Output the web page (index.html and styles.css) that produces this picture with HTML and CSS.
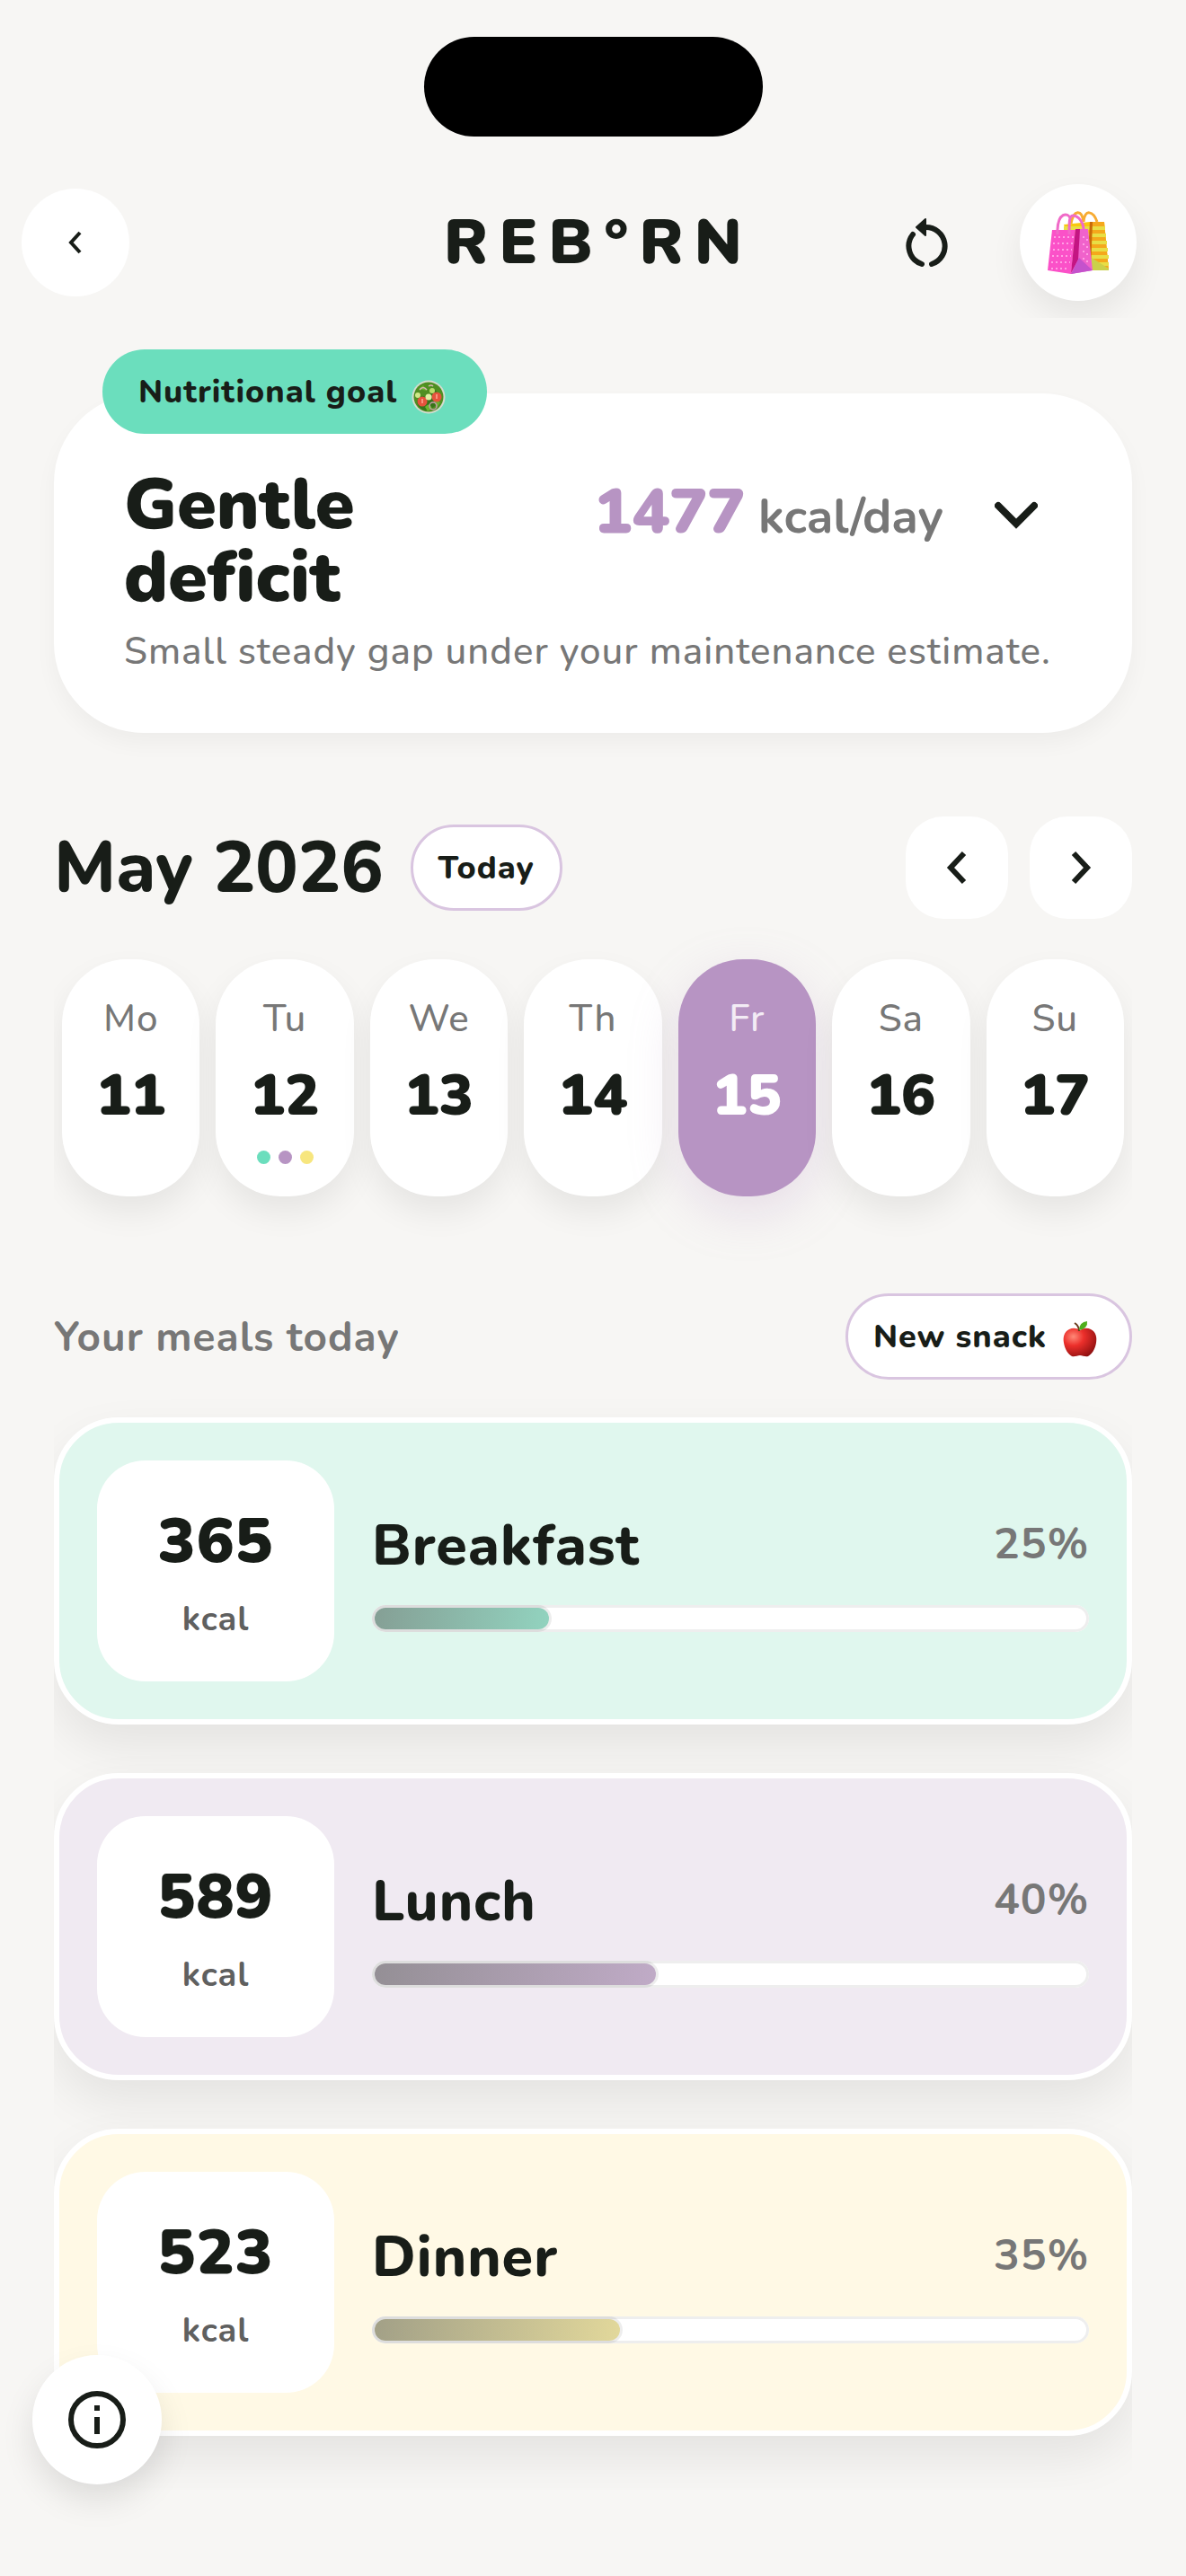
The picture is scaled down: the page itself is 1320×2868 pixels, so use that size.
FILE: index.html
```html
<!DOCTYPE html>
<html lang="en">
<head>
  <meta charset="UTF-8">
  <meta name="viewport" content="width=device-width, initial-scale=1">
  <title>Reborn</title>
  <link rel="stylesheet" href="styles.css">
</head>
<body>
  <div class="island"></div>

  <header class="topbar">
    <button type="button" class="round-btn back-btn" aria-label="Back">
      <svg width="18" height="28" viewBox="0 0 18 28"><path d="M14 3 4 14l10 11" fill="none" stroke="currentColor" stroke-width="4"/></svg>
    </button>
    <h1 class="logo">REB°RN</h1>
    <div class="topbar-actions">
      <button type="button" class="icon-btn" aria-label="Refresh">
        <svg width="52" height="58" viewBox="0 0 52 58">
          <path d="M10 20A21 21 0 0 0 20 53M31 53A21 21 0 0 0 24 12" fill="none" stroke="currentColor" stroke-width="6" stroke-linecap="round"/>
          <path d="M24 3v18L14 12z" fill="currentColor" stroke="currentColor" stroke-width="2" stroke-linejoin="round"/>
        </svg>
      </button>
      <button type="button" class="round-btn bag-btn" aria-label="Shopping list">
        <svg width="70" height="70" viewBox="0 0 70 70">
          <path d="M19 15 48 12 64 12 69 66 36 66z" fill="#f9c80e"/>
          <path d="M50 12h14l5 54H48z" fill="#f5a81c"/>
          <path d="M19 19h46M20 27h46M21 35h46M22 43h46M23 51h46M24 59h45" stroke="#e8de45" stroke-width="4"/>
          <path d="M48 12h3l-2 54h-4z" fill="#c96a08"/>
          <path d="M50 52 69 64v2H44z" fill="#cbd04a"/>
          <path d="M27 14C30-2 39-2 41 12M41 12C42-3 52 0 56 12" fill="none" stroke="#f7ab32" stroke-width="3"/>
          <path d="M6 21h26l-5 49-26-4z" fill="#fb51c8"/>
          <path d="M32 20h14l5 46-24 4z" fill="#f062cb"/>
          <path d="M32 20h5l-2 34-8 15z" fill="#c41583"/>
          <path d="M36 52 51 66l-24 4z" fill="#c452cc"/>
          <path d="M8 29h22M7 36h22M7 43h21M6 50h21M5 57h21M5 64h20" stroke="#ff9fe4" stroke-width="2" stroke-dasharray="2 3"/>
          <path d="M41 28v30M45 31v30" stroke="#ff9fe4" stroke-width="2" stroke-dasharray="2 6"/>
          <path d="M12 26C11-1 25 2 26 8M25 26C25 12 25 5 29 5 36 5 41 14 41 20" fill="none" stroke="#f06ac8" stroke-width="3"/>
        </svg>
      </button>
    </div>
  </header>

  <main class="page">
    <section class="goal-card">
      <p class="goal-tag">Nutritional goal
        <svg width="38" height="50" viewBox="0 -12 38 50">
          <circle cx="19" cy="19" r="18.500" fill="#d5dccf"/>
          <circle cx="19" cy="19" r="16.500" fill="#4f8f22"/>
          <path d="M6 24q4-9 9-5t8-10q6 3 8 9t-6 12-13 3-6-9" fill="#37741a"/>
          <path d="M15 30q5-6 8 2l-5 3zM24 21l8 4-4 6zM8 10l5-4 4 6z" fill="#69b32e"/>
          <circle cx="12" cy="24" r="5.500" fill="#e5533d"/>
          <circle cx="28" cy="19" r="5.500" fill="#e5533d"/>
          <path d="M12 21v5M28 16v5" stroke="#ffa892" stroke-width="1.500"/>
          <circle cx="7" cy="17" r="3" fill="#cfe888"/>
          <circle cx="19" cy="19" r="3.500" fill="#e0f0a5"/>
          <circle cx="23" cy="12" r="3" fill="#b9dd6c"/>
          <circle cx="24" cy="29" r="4" fill="none" stroke="#c79baa" stroke-width="1.500"/>
          <path d="M9 11q4-5 8 0M19 7q3-2 5 0" fill="none" stroke="#dab6b4" stroke-width="1.500"/>
        </svg>
      </p>
      <div class="goal-row">
        <h2 class="goal-name">Gentle deficit</h2>
        <p class="goal-value"><strong>1477</strong> kcal/day</p>
        <button type="button" class="icon-btn" aria-label="Show details">
          <svg width="48" height="32" viewBox="0 0 48 32"><path d="M4 5 24 25 44 5" fill="none" stroke="currentColor" stroke-width="8" stroke-linecap="round"/></svg>
        </button>
      </div>
      <p class="goal-note">Small steady gap under your maintenance estimate.</p>
    </section>

    <section class="calendar">
      <div class="calendar-head">
        <h2 class="month">May 2026</h2>
        <button type="button" class="pill">Today</button>
        <div class="calendar-nav">
          <button type="button" class="nav-btn" aria-label="Previous week">
            <svg width="24" height="38" viewBox="0 0 24 38"><path d="M20 3 5 19l15 16" fill="none" stroke="currentColor" stroke-width="6"/></svg>
          </button>
          <button type="button" class="nav-btn" aria-label="Next week">
            <svg width="24" height="38" viewBox="0 0 24 38"><path d="M4 3 19 19 4 35" fill="none" stroke="currentColor" stroke-width="6"/></svg>
          </button>
        </div>
      </div>
      <div class="days">
        <button type="button" class="day"><span>Mo</span><b>11</b></button>
        <button type="button" class="day"><span>Tu</span><b>12</b>
          <i class="dots"><i class="dot mint"></i><i class="dot lilac"></i><i class="dot yellow"></i></i>
        </button>
        <button type="button" class="day"><span>We</span><b>13</b></button>
        <button type="button" class="day"><span>Th</span><b>14</b></button>
        <button type="button" class="day active"><span>Fr</span><b>15</b></button>
        <button type="button" class="day"><span>Sa</span><b>16</b></button>
        <button type="button" class="day"><span>Su</span><b>17</b></button>
      </div>
    </section>

    <section>
      <div class="meals-head">
        <h2 class="meals-title">Your meals today</h2>
        <button type="button" class="pill">New snack
          <svg width="46" height="48" viewBox="0 -6 46 48">
            <defs>
              <radialGradient id="apple" cx="30%" cy="30%" r="80%">
                <stop offset="0" stop-color="#ff8a78"/>
                <stop offset=".4" stop-color="#ec2f2b"/>
                <stop offset="1" stop-color="#8e1010"/>
              </radialGradient>
            </defs>
            <path d="M19 11q6-4 12-1c6 3 7 9 6 15-1 7-5 13-9 15-3 1-6-1-9-1s-6 2-9 1c-4-2-8-8-9-15-1-6 0-12 6-15q6-3 12 1z" fill="url(#apple)"/>
            <path d="M18 12q0-6-5-9" fill="none" stroke="#6a3a1c" stroke-width="2"/>
            <path d="M18 11Q18 2 27 1q1 8-9 10z" fill="#4fae1c"/>
          </svg>
        </button>
      </div>

      <div class="meals">
        <article class="meal meal-mint">
          <div class="kcal"><strong>365</strong><span>kcal</span></div>
          <div class="meal-body">
            <div class="meal-row"><h3>Breakfast</h3><span>25%</span></div>
            <div class="bar"><div class="fill" style="width: 25%"></div></div>
          </div>
        </article>
        <article class="meal meal-lilac">
          <div class="kcal"><strong>589</strong><span>kcal</span></div>
          <div class="meal-body">
            <div class="meal-row"><h3>Lunch</h3><span>40%</span></div>
            <div class="bar"><div class="fill" style="width: 40%"></div></div>
          </div>
        </article>
        <article class="meal meal-yellow">
          <div class="kcal"><strong>523</strong><span>kcal</span></div>
          <div class="meal-body">
            <div class="meal-row"><h3>Dinner</h3><span>35%</span></div>
            <div class="bar"><div class="fill" style="width: 35%"></div></div>
          </div>
        </article>
      </div>
    </section>
  </main>

  <button type="button" class="info-btn" aria-label="Info">
    <svg width="66" height="66" viewBox="0 0 66 66">
      <circle cx="33" cy="33" r="29" fill="none" stroke="currentColor" stroke-width="6"/>
      <path d="M33 17v6M33 30v19" stroke="currentColor" stroke-width="6"/>
    </svg>
  </button>
</body>
</html>
```

FILE: styles.css
```css
/* Base */
* {
  box-sizing: border-box;
}
body {
  margin: 0;
  background: #f7f6f4;
  color: #181d18;
  font-family: Nunito, Lato, sans-serif;
  font-weight: 500;
  font-variant-ligatures: none;
  letter-spacing: 1px;
}
h1, h2, h3, p {
  margin: 0;
}
button {
  padding: 0;
  border: none;
  background: #fff;
  color: inherit;
  font: inherit;
  letter-spacing: inherit;
  cursor: pointer;
}
svg {
  display: block;
  flex: none;
}
.island {
  width: 377px;
  height: 111px;
  margin: 41px auto 0;
  border-radius: 56px;
  background: #000;
}

/* Top bar */
.topbar {
  display: grid;
  grid-template-columns: 1fr auto 1fr;
  align-items: center;
  margin-top: 33px;
  padding: 20px 24px 19px;
  overflow: hidden;
}
.round-btn {
  display: flex;
  align-items: center;
  justify-content: center;
  border-radius: 50%;
}
.back-btn {
  width: 120px;
  height: 120px;
}
.bag-btn {
  width: 130px;
  height: 130px;
  box-shadow: 0 18px 36px rgba(0, 0, 0, 0.07);
}
.logo {
  padding-left: 12px;
  font-size: 70px;
  line-height: 80px;
  font-weight: 900;
  letter-spacing: 12px;
}
.topbar-actions {
  display: flex;
  justify-content: flex-end;
  align-items: center;
  gap: 77px;
  padding-right: 31px;
}
.icon-btn {
  background: none;
}

.page {
  padding: 0 60px;
}

/* Goal */
.goal-card {
  position: relative;
  margin-top: 84px;
  padding: 84px 78px 60px;
  border-radius: 100px;
  background: #fff;
  box-shadow: 0 12px 24px rgba(0, 0, 0, 0.04);
}
.goal-tag {
  position: absolute;
  top: -49px;
  left: 54px;
  display: flex;
  align-items: center;
  gap: 16px;
  height: 94px;
  padding: 0 46px 0 40px;
  border-radius: 47px;
  background: #6bdebd;
  font-size: 36px;
  font-weight: 800;
}
.goal-row {
  display: flex;
  align-items: flex-start;
}
.goal-name {
  width: 340px;
  font-size: 79px;
  line-height: 81px;
  font-weight: 900;
  letter-spacing: 0;
}
.goal-value {
  margin-left: auto;
  color: #777;
  font-size: 54px;
  line-height: 96px;
  font-weight: 700;
  letter-spacing: 0;
}
.goal-value strong {
  color: #b794c3;
  font-size: 70px;
  font-weight: 900;
}
.goal-row .icon-btn {
  margin: 36px 27px 0 57px;
}
.goal-note {
  margin-top: 12px;
  color: #777;
  font-size: 42px;
  line-height: 60px;
}

/* Calendar */
.calendar-head {
  display: flex;
  align-items: center;
  margin-top: 93px;
}
.month {
  font-size: 79px;
  line-height: 96px;
  font-weight: 800;
  letter-spacing: 0;
}
.pill {
  display: flex;
  align-items: center;
  gap: 18px;
  height: 96px;
  padding: 0 28px;
  border: 3px solid #d9c5e0;
  border-radius: 48px;
  font-size: 36px;
  font-weight: 800;
}
.calendar-head .pill {
  margin-left: 30px;
}
.calendar-nav {
  display: flex;
  gap: 24px;
  margin-left: auto;
}
.nav-btn {
  display: flex;
  align-items: center;
  justify-content: center;
  width: 114px;
  height: 114px;
  border-radius: 42px;
}
.days {
  display: flex;
  gap: 18px;
  padding: 45px 9px 72px;
  overflow: hidden;
}
.day {
  display: flex;
  flex: 1;
  flex-direction: column;
  align-items: center;
  height: 264px;
  padding-top: 37px;
  border-radius: 72px;
  box-shadow: 0 18px 36px rgba(0, 0, 0, 0.07);
}
.day span {
  color: #777;
  font-size: 42px;
  line-height: 60px;
}
.day b {
  margin-top: 13px;
  font-size: 64px;
  line-height: 84px;
  font-weight: 900;
  letter-spacing: 0;
}
.day.active {
  background: #b794c3;
  color: #fff;
  box-shadow: 0 18px 54px rgba(183, 148, 195, 0.25);
}
.day.active span {
  color: #f3ecf5;
}
.dots {
  display: flex;
  gap: 9px;
  margin-top: 19px;
}
.dot {
  width: 15px;
  height: 15px;
  border-radius: 50%;
}
.mint {
  background: #6bdebd;
}
.lilac {
  background: #b794c3;
}
.yellow {
  background: #f7e67e;
}

/* Meals */
.meals-head {
  display: flex;
  align-items: center;
  justify-content: space-between;
  margin-top: 36px;
}
.meals-title {
  color: #777;
  font-size: 46px;
  font-weight: 700;
}
.meals {
  display: flex;
  flex-direction: column;
  gap: 54px;
  padding: 42px 0 60px;
  overflow: hidden;
}
.meal {
  display: flex;
  align-items: center;
  gap: 42px;
  padding: 42px;
  border: 6px solid #fff;
  border-radius: 72px;
  box-shadow: 0 24px 54px rgba(0, 0, 0, 0.08);
}
.meal-mint {
  background: #e0f7ee;
  --from: #859f95;
  --to: #92d3bf;
}
.meal-lilac {
  background: #f0eaf2;
  --from: #948f95;
  --to: #c0abc7;
}
.meal-yellow {
  background: #fff9e5;
  --from: #a2a087;
  --to: #e2d89b;
}
.kcal {
  display: flex;
  flex-direction: column;
  align-items: center;
  width: 264px;
  height: 246px;
  padding-top: 42px;
  border-radius: 54px;
  background: #fff;
}
.kcal strong {
  font-size: 70px;
  line-height: 96px;
  font-weight: 900;
}
.kcal span {
  margin-top: 12px;
  color: #5f605f;
  font-size: 38px;
  line-height: 54px;
  font-weight: 700;
}
.meal-body {
  flex: 1;
  padding-bottom: 2px;
}
.meal-row {
  display: flex;
  justify-content: space-between;
}
.meal-row h3 {
  font-size: 63px;
  line-height: 84px;
  font-weight: 800;
}
.meal-row span {
  color: #777;
  font-size: 48px;
  line-height: 80px;
  font-weight: 700;
}
.bar {
  height: 30px;
  margin-top: 24px;
  border-radius: 15px;
  background: #fff;
  box-shadow: inset 0 0 0 3px #eee;
}
.fill {
  height: 30px;
  border: 3px solid rgba(0, 0, 0, 0.07);
  border-radius: 15px;
  background: linear-gradient(100deg, var(--from), var(--to)) padding-box;
}

/* Floating info button */
.info-btn {
  position: fixed;
  left: 36px;
  bottom: 102px;
  display: flex;
  align-items: center;
  justify-content: center;
  width: 144px;
  height: 144px;
  border-radius: 50%;
  box-shadow: 0 18px 36px rgba(0, 0, 0, 0.1);
}
```
